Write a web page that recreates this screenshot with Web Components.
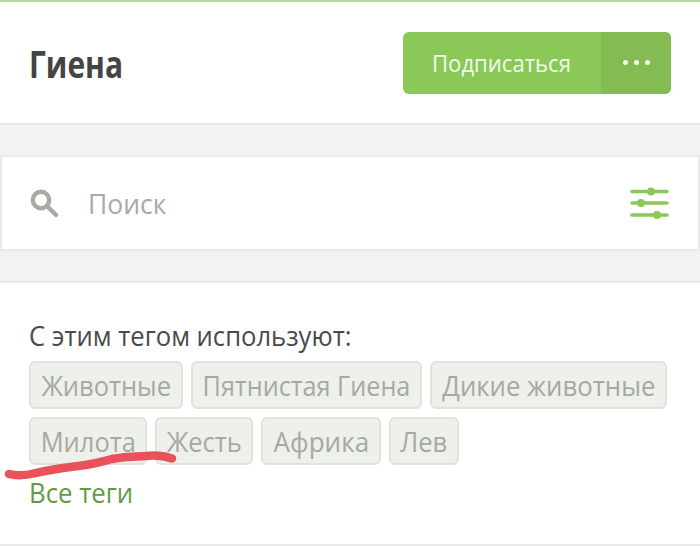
<!DOCTYPE html>
<html><head><meta charset="utf-8"><style>
html,body{margin:0;padding:0;background:#f2f2f2;overflow:hidden}
body{width:700px;height:546px;font-family:"Open Sans","Noto Sans",sans-serif}
</style></head><body>
<template id="t-page"><style>
:host{display:flex;flex-direction:column;position:relative;width:700px;height:546px;background:#f2f2f2;overflow:hidden;border-top:2px solid #b5d99a;box-sizing:border-box}
svg{position:absolute;left:0;top:449px;pointer-events:none}
</style><slot></slot>
<svg width="180" height="32" viewBox="0 0 180 32" aria-hidden="true"><path d="M9 23C16 25 26 24.500 36 22C50 18.500 62 17 78 15C92 13.500 102 10.500 112 8C124 5.500 134 5.500 146 5C156 4 166 5.500 172 7.500" fill="none" stroke="#e8535b" stroke-width="8.500" stroke-linecap="round" stroke-linejoin="round"/></svg>
</template>
<template id="t-head"><style>
:host{display:flex;align-items:center;justify-content:space-between;height:121px;box-sizing:content-box;background:#fff;border-bottom:2px solid #e8e8e8;padding:0 29px 0 29px}
h1{margin:2px 0 0;font:700 37px/1 "Open Sans",sans-serif;color:#444;transform:scaleX(.81);transform-origin:0 50%}
</style><h1><slot></slot></h1><slot name="action"></slot></template>
<template id="t-sub"><style>
:host{display:flex;width:268px;height:62px;border-radius:6px;overflow:hidden;background:#8ac858;color:#fff}
.l{flex:1;display:flex;align-items:center;justify-content:center;padding-right:2px;font:400 24px/1 "Open Sans",sans-serif;color:#f2f9ea}
.l span{flex:none;display:block;transform:scaleX(.92)}
.r{width:70px;background:#84bc53;display:flex;align-items:center;justify-content:center;gap:6px}
i{width:5px;height:5px;border-radius:50%;background:#f4faee}
</style><div class="l"><span><slot></slot></span></div><div class="r"><i></i><i></i><i></i></div></template>
<template id="t-search"><style>
:host{display:flex;align-items:center;margin-top:30px;height:92px;background:#fff;border:2px solid #e9e9e9;padding:0 28px 0 28px}
svg{display:block;flex:none}
.p{flex:1;margin-left:28px;font:400 28px/1 "Open Sans",sans-serif;color:#a9aaa4;transform:scaleX(.945);transform-origin:0 50%}
</style><svg width="30" height="30" viewBox="0 0 30 30"><circle cx="11" cy="12" r="8.200" fill="none" stroke="#a8aaa2" stroke-width="4.400"/><path d="M17.500 18.500l8.500 8.500" stroke="#a8aaa2" stroke-width="4.400" stroke-linecap="round"/></svg>
<div class="p"><slot></slot></div>
<svg width="40" height="34" viewBox="0 0 40 34"><path d="M2 5.500H37M2 17H37M2 29H37" stroke="#8ac858" stroke-width="3.600" stroke-linecap="round" fill="none"/><g fill="#8ac858"><circle cx="21" cy="5.500" r="4"/><circle cx="11" cy="17" r="4"/><circle cx="27" cy="29" r="4"/></g></svg></template>
<template id="t-tags"><style>
:host{display:block;margin-top:30px;flex:none;background:#fff;border-top:2px solid #e9e9e9;border-bottom:2px solid #e9e9e9;padding:0 29px;box-sizing:border-box;height:265px}
.t{margin:36px 0 0 0;font:400 28px/32px "Open Sans",sans-serif;color:#4a4a4a;transform:scaleX(.915);transform-origin:0 50%;white-space:nowrap}
.w{display:flex;flex-wrap:wrap;gap:8px;margin-top:10px}
a{display:block;margin:11px 0 0 0;font:400 28px/32px "Open Sans",sans-serif;color:#649a45;transform:scaleX(.92);transform-origin:0 50%;text-decoration:none}
</style><div class="t"><slot name="title"></slot></div><div class="w"><slot></slot></div><a><slot name="all"></slot></a></template>
<template id="t-tag"><style>
:host{display:flex;justify-content:center;box-sizing:border-box;height:48px;border:2px solid #e0e3da;border-radius:6px;background:#eef0eb;color:#a6a99f;font:400 28px/44px "Open Sans",sans-serif;white-space:nowrap}
span{flex:none;display:block;transform:scaleX(var(--sx,.91))}
</style><span><slot></slot></span></template>
<x-page>
<x-head>Гиена<x-sub slot="action">Подписаться</x-sub></x-head>
<x-search>Поиск</x-search>
<x-tags>
<span slot="title">С этим тегом используют:</span>
<x-tag style="width:154px">Животные</x-tag><x-tag style="width:231px;--sx:.9">Пятнистая Гиена</x-tag><x-tag style="width:237px;--sx:.92">Дикие животные</x-tag><x-tag style="width:118px">Милота</x-tag><x-tag style="width:98px">Жесть</x-tag><x-tag style="width:120px;--sx:.93">Африка</x-tag><x-tag style="width:70px">Лев</x-tag>
<span slot="all">Все теги</span>
</x-tags>
</x-page>
<script>
const def=(n,id)=>customElements.define(n,class extends HTMLElement{constructor(){super();this.attachShadow({mode:'open'}).append(document.getElementById(id).content.cloneNode(true))}});
def('x-page','t-page');def('x-head','t-head');def('x-sub','t-sub');def('x-search','t-search');def('x-tags','t-tags');def('x-tag','t-tag');
</script>
</body></html>
